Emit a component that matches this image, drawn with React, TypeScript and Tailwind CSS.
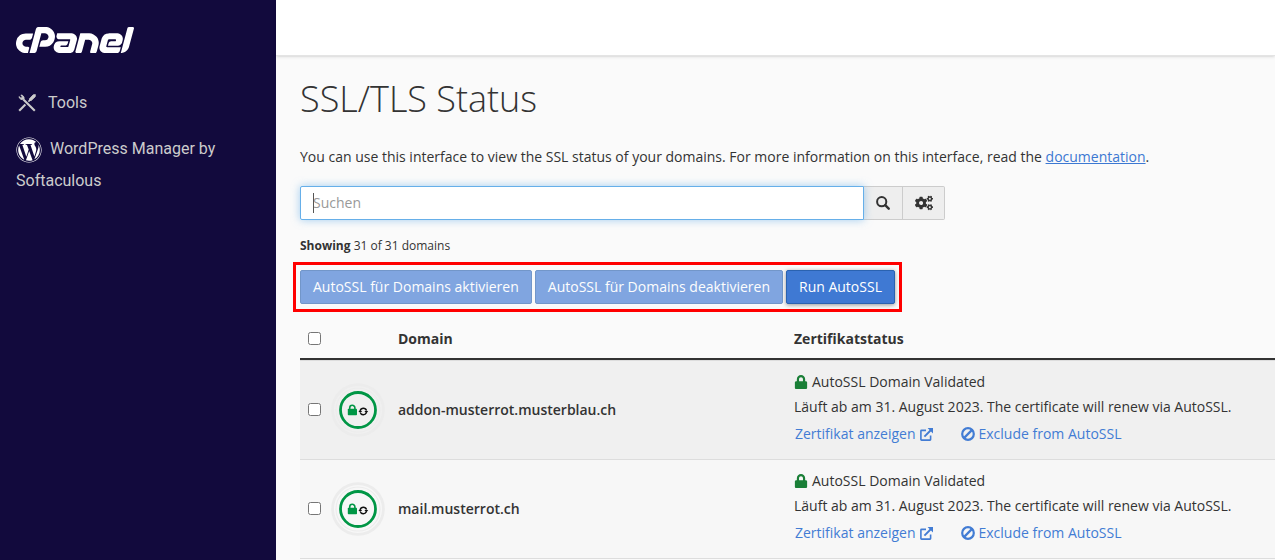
import React from "react";
import { SiCpanel } from "react-icons/si";
import { FaWordpress, FaCogs, FaLock } from "react-icons/fa";

const domains = [
  { name: "addon-musterrot.musterblau.ch", expires: "31. August 2023" },
  { name: "mail.musterrot.ch", expires: "31. August 2023" },
];

function ToolsIcon() {
  return (
    <svg viewBox="0 0 18 18" className="size-[18px]" fill="none" stroke="currentColor" aria-hidden="true">
      <path d="M5.4 5.4 16.8 16.8" strokeWidth="2.1" />
      <path d="M1 2.6 3 4.3 4.4 3 2.9 1A3.2 3.2 0 0 1 6 5 3.2 3.2 0 0 1 1 2.6Z" fill="currentColor" strokeWidth=".9" />
      <path d="M1.2 16.8 7.4 10.6" strokeWidth="2.1" />
      <path d="M10.4 7.6 12.4 5.6" strokeWidth="1.5" />
      <path d="M11.4 4.8 15.2.8 17.4.6 17.2 2.8 13.2 6.6 11.6 6.4Z" fill="currentColor" strokeWidth=".8" />
    </svg>
  );
}

function SearchIcon() {
  return (
    <svg viewBox="0 0 14 14" className="size-3.5" fill="none" stroke="currentColor" aria-hidden="true">
      <circle cx="5.7" cy="5.7" r="4.6" strokeWidth="2" />
      <path d="M9.2 9.2 12.7 12.7" strokeWidth="2.4" strokeLinecap="round" />
    </svg>
  );
}

function ExternalIcon() {
  return (
    <svg viewBox="0 0 13 13" className="size-[13px]" fill="none" stroke="currentColor" aria-hidden="true">
      <path d="M6 2.4H1.5Q.9 2.4.9 3V11.5Q.9 12.1 1.5 12.1H10Q10.6 12.1 10.6 11.5V7.6" strokeWidth="1.6" />
      <path d="M4.4 8.6 11 2" strokeWidth="1.9" />
      <path d="M7.6 0H13V5.4Z" fill="currentColor" stroke="none" />
    </svg>
  );
}

function BanIcon() {
  return (
    <svg viewBox="0 0 14 14" className="size-3.5" fill="none" stroke="currentColor" strokeWidth="2.2" aria-hidden="true">
      <circle cx="7" cy="7" r="5.8" />
      <path d="M2.9 11.1 11.1 2.9" />
    </svg>
  );
}

function StatusBadge() {
  return (
    <svg viewBox="0 0 54 54" className="block size-[54px]" role="img" aria-label="AutoSSL">
      <circle cx="27" cy="27" r="25.4" fill="none" stroke="#ececec" strokeWidth="2.8" />
      <circle cx="27" cy="27" r="22" fill="none" stroke="#ececec" strokeWidth="1.2" />
      <circle cx="27" cy="27" r="17.5" fill="none" stroke="#009645" strokeWidth="2.8" />
      <path d="M18.7 26.2V24.9a2.6 2.6 0 0 1 5.2 0v1.3" fill="none" stroke="#009645" strokeWidth="1.6" />
      <rect x="16.8" y="25.8" width="9.2" height="6.5" rx=".8" fill="#009645" />
      <path d="M29.2 27.6A3.3 3.3 0 0 1 35.5 27.6M35.3 29.7A3.3 3.3 0 0 1 29.1 29.4" fill="none" stroke="#111" strokeWidth="1.5" />
      <path d="M33.4 28.1H37.2L35.4 30.4ZM27.4 29H31.2L29.2 26.7Z" fill="#111" />
    </svg>
  );
}

export default function App() {
  return (
    <div className="flex min-h-screen overflow-x-hidden bg-[#fafafa] font-['Open_Sans',sans-serif] text-sm text-[#333]">
      <aside className="w-[276px] shrink-0 bg-[#120a3d] px-4 pt-[27px] font-['Roboto',sans-serif] text-base text-[#ccc]">
        <a href="#home" aria-label="cPanel" className="block h-[26px] w-[118px] overflow-hidden text-white">
          <SiCpanel className="-mt-[46px] size-[118px]" />
        </a>
        <nav className="mt-[34px]">
          <a href="#tools" className="flex h-8 items-center gap-3 pl-0.5">
            <ToolsIcon />
            Tools
          </a>
          <a href="#wordpress" className="mt-3.5 block leading-8">
            <FaWordpress className="mr-2 inline size-[26px] align-middle text-white" />
            WordPress Manager by Softaculous
          </a>
        </nav>
      </aside>

      <div className="min-w-0 grow">
        <header className="h-14 border-b border-[#e4e4e4] bg-white shadow-sm" />
        <main className="pt-4 pl-6">
          <h1 className="text-4xl leading-[54px] font-light">SSL/TLS Status</h1>
          <p className="mt-5 leading-[22px]">
            You can use this interface to view the SSL status of your domains. For more information on this interface,
            read the{" "}
            <a href="#documentation" className="text-[#3c78d2] underline">
              documentation
            </a>
            .
          </p>

          <form className="mt-[18px] flex h-[34px]" onSubmit={(e) => e.preventDefault()}>
            <div className="relative z-10 flex w-[564px]">
              <input
                type="text"
                aria-label="Suchen"
                placeholder="Suchen"
                className="w-full rounded-l-xs border border-[#66afe9] bg-white px-3 shadow-[0_0_8px_rgba(102,175,233,0.6)] outline-none placeholder:text-[#999]"
              />
              <span aria-hidden="true" className="pointer-events-none absolute inset-y-[7px] left-[13px] w-px bg-[#555]" />
            </div>
            <button type="submit" aria-label="Suche starten" className="flex w-[39px] items-center justify-center border-y border-r border-[#ccc] bg-[#eee]">
              <SearchIcon />
            </button>
            <button type="button" aria-label="Einstellungen" className="flex w-[42px] items-center justify-center rounded-r-xs border-y border-r border-[#ccc] bg-[#eee]">
              <FaCogs className="size-[18px]" />
            </button>
          </form>

          <p className="mt-4 text-xs leading-5">
            <strong>Showing</strong> 31 of 31 domains
          </p>

          <div className="mt-[13px] flex w-fit gap-[3px] py-px text-white outline-3 outline-offset-4 outline-[#f00]">
            <button type="button" disabled className="h-[34px] rounded-xs border border-[#2a62b0] bg-[#3f79d3] px-3 opacity-65">
              AutoSSL für Domains aktivieren
            </button>
            <button type="button" disabled className="h-[34px] rounded-xs border border-[#2a62b0] bg-[#3f79d3] px-3 opacity-65">
              AutoSSL für Domains deaktivieren
            </button>
            <button type="button" className="h-[34px] rounded-xs border border-[#2a62b0] bg-[#3f79d3] px-3 shadow-[0_1px_4px_rgba(0,0,0,0.4)]">
              Run AutoSSL
            </button>
          </div>

          <table className="mt-3.5 w-full table-fixed border-separate border-spacing-0 text-left">
            <thead>
              <tr className="h-[41px]">
                <th className="w-[31px] border-b-2 border-[#333] pl-2">
                  <input type="checkbox" aria-label="Alle auswählen" className="block size-[13px]" />
                </th>
                <th className="w-[59px] border-b-2 border-[#333]" />
                <th className="w-[396px] border-b-2 border-[#333] pl-2">Domain</th>
                <th className="border-b-2 border-[#333] pl-2">Zertifikatstatus</th>
              </tr>
            </thead>
            <tbody>
              {domains.map((d) => (
                <tr key={d.name} className="odd:bg-[#f0f0f0] even:bg-[#f7f7f7] [&>td]:border-t [&>td]:border-[#ddd] last:[&>td]:border-b">
                  <td className="pb-0.5 pl-2">
                    <input type="checkbox" aria-label={d.name} className="block size-[13px]" />
                  </td>
                  <td>
                    <StatusBadge />
                  </td>
                  <td className="pl-2 font-semibold">{d.name}</td>
                  <td className="pt-2 pb-2.5 pl-2 whitespace-nowrap">
                    <div className="flex h-[26px] items-center gap-1">
                      <FaLock className="size-3.5 text-[#1a7f37]" />
                      AutoSSL Domain Validated
                    </div>
                    <div className="leading-6">Läuft ab am {d.expires}. The certificate will renew via AutoSSL.</div>
                    <div className="flex h-[30px] items-center gap-7 pl-px text-[#427cd4]">
                      <a href="#certificate" className="flex items-center gap-1">
                        Zertifikat anzeigen
                        <ExternalIcon />
                      </a>
                      <button type="button" className="flex items-center gap-1">
                        <BanIcon />
                        Exclude from AutoSSL
                      </button>
                    </div>
                  </td>
                </tr>
              ))}
            </tbody>
          </table>
        </main>
      </div>
    </div>
  );
}
